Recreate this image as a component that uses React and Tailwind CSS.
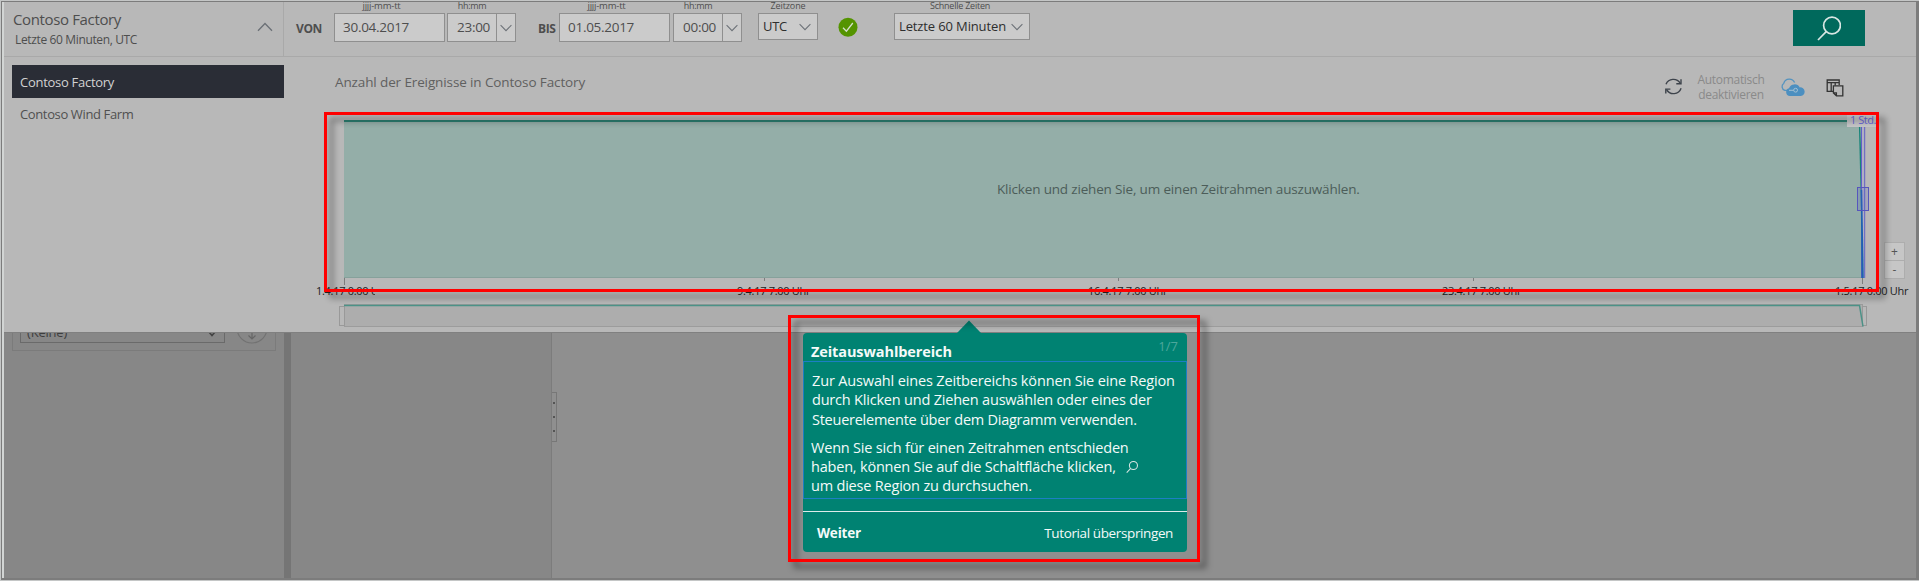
import React from 'react';

function Chevron({ className }) {
  return (
    <svg className={className} viewBox="0 0 14 9" fill="none" stroke="#6b7076" strokeWidth="1.2">
      <path d="M0.7 1.2 L7 7.6 L13.3 1.2" />
    </svg>
  );
}

function Search({ className, width }) {
  return (
    <svg className={className} viewBox="0 0 24 25" fill="none" stroke="#d8e6e3" strokeWidth={width}>
      <circle cx="15" cy="9.5" r="8.4" />
      <path d="M9.2 15.6 L1 24" />
    </svg>
  );
}

function DateField({ value }) {
  return (
    <div className="flex w-[111px] flex-col">
      <div className="h-[11px] pr-4 text-center text-[9.5px] leading-[8px] tracking-[-0.2px]">jjjj-mm-tt</div>
      <div className="h-[29px] border border-[#8f8f8f] bg-[#cbcbcb] pl-2 text-[13.5px] leading-[27px] tracking-[-0.28px]">{value}</div>
    </div>
  );
}

function TimeField({ value }) {
  return (
    <div className="flex w-[69px] flex-col">
      <div className="h-[11px] w-[50px] text-center text-[9px] leading-[8px] tracking-[-0.35px]">hh:mm</div>
      <div className="flex h-[29px] border border-[#8f8f8f] bg-[#cbcbcb]">
        <div className="w-[48px] pl-[9px] text-[13.5px] leading-[27px] tracking-[-0.28px]">{value}</div>
        <div className="flex flex-1 items-center justify-center border-l border-[#8f8f8f]">
          <Chevron className="h-[8px] w-[12px]" />
        </div>
      </div>
    </div>
  );
}

function Header() {
  return (
    <div className="flex h-[55px] shrink-0 border-b border-[#a9a9a9] text-[#4e4e4e]">
      <div className="flex w-[280px] shrink-0 justify-between border-r border-[#a9a9a9] pl-[9px] pr-[10px]">
        <div className="flex flex-col pt-[6px]">
          <div className="text-[15px] leading-[23px] tracking-[-0.36px]">Contoso Factory</div>
          <div className="pl-[2px] pt-px text-[12px] leading-[16px] tracking-[-0.36px]">Letzte 60 Minuten, UTC</div>
        </div>
        <Chevron className="mt-[20px] h-[10px] w-[16px] rotate-180" />
      </div>
      <div className="flex flex-1">
        <div className="ml-[12px] w-[38px] pt-[17px] text-[12px] font-bold leading-[19px] tracking-[-0.4px]">VON</div>
        <DateField value="30.04.2017" />
        <div className="w-[2px]" />
        <TimeField value="23:00" />
        <div className="ml-[22px] w-[21px] pt-[17px] text-[12px] font-bold leading-[19px] tracking-[-0.4px]">BIS</div>
        <DateField value="01.05.2017" />
        <div className="w-[3px]" />
        <TimeField value="00:00" />
        <div className="ml-[16px] flex w-[60px] flex-col">
          <div className="h-[11px] text-center text-[9px] leading-[8px] tracking-[-0.1px]">Zeitzone</div>
          <div className="flex h-[27px] items-center justify-between border border-[#8f8f8f] bg-[#cbcbcb] pl-1 pr-[6px] text-[13px] tracking-[-0.3px] text-[#2e2e2e]">
            UTC
            <Chevron className="h-[8px] w-[12px]" />
          </div>
        </div>
        <svg className="ml-[20px] mt-[15px] h-[20px] w-[20px]" viewBox="0 0 20 20" fill="none">
          <circle cx="10" cy="10.3" r="9.5" fill="#549400" />
          <path d="M5 10.8 L8.4 14.2 L14.8 6" stroke="#d5e0cb" strokeWidth="1.3" />
        </svg>
        <div className="ml-[36px] flex w-[136px] flex-col">
          <div className="h-[11px] pr-1 text-center text-[9px] leading-[8px] tracking-[-0.23px]">Schnelle Zeiten</div>
          <div className="flex h-[27px] items-center justify-between border border-[#8f8f8f] bg-[#cbcbcb] pl-1 pr-[6px] text-[13px] tracking-[-0.13px] text-[#2e2e2e]">
            Letzte 60 Minuten
            <Chevron className="h-[8px] w-[12px]" />
          </div>
        </div>
        <div className="ml-auto mr-[51px] mt-[8px] flex h-[36px] w-[72px] items-center justify-center bg-[#00695c]">
          <Search className="h-[25px] w-[24px]" width="1.7" />
        </div>
      </div>
    </div>
  );
}

function Toolbar() {
  return (
    <div className="flex h-[61px] pl-[50px] text-[#606060]">
      <div className="pt-[15px] text-[13.5px] leading-[20px] tracking-[-0.12px]">Anzahl der Ereignisse in Contoso Factory</div>
      <div className="ml-auto mr-[72px] flex">
        <svg className="mt-[20px] h-[19px] w-[19px]" viewBox="0 0 19 19" fill="none" stroke="#3d434b" strokeWidth="1.4">
          <path d="M2 7.2 A8 8 0 0 1 16.2 6.2 M17.1 11.3 A8 8 0 0 1 2.6 12.6" />
          <path d="M17 2.2 V6.8 H12.3 M1.8 16.6 V12.1 H6.4" />
        </svg>
        <div className="ml-[13px] w-[70px] pt-[15px] text-center text-[12px] leading-[15px] tracking-[-0.3px] text-[#8a8a8a]">
          Automatisch deaktivieren
        </div>
        <svg className="ml-[14px] mt-[21px] h-[19px] w-[25px]" viewBox="0 0 25 19">
          <path d="M9 12.3 H4.8 A4 4 0 0 1 3.8 5.2 A5.8 5.8 0 0 1 14.6 4.6" fill="none" stroke="#5493bf" strokeWidth="1.3" />
          <path d="M9.8 18 A4 4 0 0 1 9 10.2 A6 6 0 0 1 19.8 9.4 A4.3 4.3 0 0 1 20.8 18 Z" fill="#4c8fc0" />
          <circle cx="15.6" cy="12.2" r="1.9" fill="none" stroke="#a5c1d3" strokeWidth="1" />
          <path d="M9 12.3 H13.7" stroke="#a5c1d3" strokeWidth="1" />
        </svg>
        <svg className="ml-[21px] mt-[22px] h-[18px] w-[18px]" viewBox="0 0 18 18" fill="none" stroke="#333" strokeWidth="1.3">
          <path d="M7 12.4 H1.2 V1 H13.2 V6 M1.2 3.6 H13.2 M5.2 3.6 V12.4 M9.2 3.6 V6.5" />
          <path d="M7.4 6.8 H16.8 V16.8 H10.4 L7.4 14 Z M7.4 13.8 H10.4 V16.8" />
        </svg>
      </div>
    </div>
  );
}

function Timeline() {
  return (
    <div className="flex">
      <svg className="h-[167px] w-[1599px] shrink-0" viewBox="285 118 1599 167">
        <path d="M344 121 H1859.5 L1863 277 H344 Z" fill="#94aea8" />
        <path d="M344 277.5 H1863" stroke="#86a19b" />
        <path d="M344 121 H1859.5" stroke="#2c8072" strokeWidth="2" />
        <path d="M1859.5 120 L1863.5 278" stroke="#17857a" strokeWidth="1.5" />
        <rect x="1862" y="127" width="3" height="151" fill="#b0afc4" />
        <path d="M1861.5 127 V278 M1864.7 127 V278" stroke="#6360c4" strokeWidth="1" />
        <path d="M1860.7 190 L1861.5 278 H1863.8 L1862.2 190 Z" fill="#1f62b0" />
        <rect x="1857.5" y="187.5" width="11" height="23" fill="#5057c8" fillOpacity="0.18" stroke="#5655bd" />
        <path d="M344.5 278 V285 M764.5 278 V281 M1118.5 278 V281 M1473.5 278 V281 M1862.5 278 V284" stroke="#7d7d7d" />
      </svg>
      <div className="mb-[6px] flex w-[21px] flex-col self-end border border-[#adadad] bg-[#c6c6c6] text-center text-[12px] text-[#555]">
        <div className="h-[18px] border-b border-[#adadad] leading-[17px]">+</div>
        <div className="h-[17px] leading-[17px]">-</div>
      </div>
    </div>
  );
}

function Axis() {
  return (
    <div className="flex h-[18px] whitespace-nowrap pl-[31px] text-[11px] leading-[12px] tracking-[-0.3px] text-[#222]">
      <div className="w-[421px]">
        <div className="w-[59px] overflow-hidden">1.4.17 0:00 Uhr</div>
      </div>
      <div className="w-[351px]">9.4.17 7:00 Uhr</div>
      <div className="w-[354px]">16.4.17 7:00 Uhr</div>
      <div className="w-[393px]">23.4.17 7:00 Uhr</div>
      <div>1.5.17 0:00 Uhr</div>
    </div>
  );
}

function Overview() {
  return (
    <svg className="h-[28px] w-[1599px]" viewBox="285 303 1599 28" fill="none">
      <rect x="344.5" y="304.5" width="1518" height="22" fill="#adadad" stroke="#9c9c9c" />
      <rect x="339.5" y="306.5" width="5" height="19" stroke="#999" />
      <rect x="1862.5" y="306.5" width="4" height="19" stroke="#999" />
      <path d="M344 305.5 H1859.5 L1863 326.5" stroke="#4b9287" strokeWidth="1.5" />
    </svg>
  );
}

function Lower() {
  return (
    <div className="flex min-h-0 flex-1 overflow-hidden border-t border-[#808080] bg-[#8f8f8f]">
      <div className="flex w-[280px] shrink-0 bg-[#878787] pl-[8px]">
        <div className="-mt-[32px] flex h-[50px] w-[264px] border border-[#7b7b7b] pl-[7px]">
          <div className="mt-[12px] flex h-[29px] w-[205px] items-center justify-between border border-[#6a6a6a] pl-[6px] pr-[8px] pt-[8px] text-[13px] tracking-[-0.2px] text-[#3e3e3e]">
            (Keine)
            <svg className="mt-[2px] h-[6px] w-[8px]" viewBox="0 0 8 6" fill="none" stroke="#444" strokeWidth="1.6">
              <path d="M1 1 L4 4.5 L7 1" />
            </svg>
          </div>
          <svg className="ml-[11px] mt-[11px] h-[32px] w-[32px]" viewBox="0 0 32 32" fill="none" stroke="#727272" strokeWidth="1.2">
            <circle cx="16" cy="15" r="15" />
            <path d="M16 6 V26 M12.5 22.5 L16 26 L19.5 22.5" stroke="#666" />
          </svg>
        </div>
      </div>
      <div className="w-[7px] bg-[#757575]" />
      <div className="w-[261px] border-r border-[#7c7c7c] bg-[#878787]" />
      <div className="mt-[59px] flex h-[50px] w-[5px] flex-col items-center justify-around border border-l-0 border-[#777] py-[3px]">
        <div className="h-[2px] w-[2px] bg-[#555]" />
        <div className="h-[2px] w-[2px] bg-[#555]" />
        <div className="h-[2px] w-[2px] bg-[#555]" />
      </div>
    </div>
  );
}

function Tutorial() {
  return (
    <div className="absolute left-[803px] top-[320px] w-[384px] text-[#f4faf9]">
      <svg className="ml-[154px] h-[13px] w-[24px]" viewBox="0 0 24 13">
        <path d="M0 13 L12 0.5 L24 13 Z" fill="#008272" />
      </svg>
      <div className="flex h-[219px] flex-col rounded-[4px] bg-[#008272]">
        <div className="flex h-[28px] justify-between pl-[8px] pr-[9px]">
          <div className="pt-[9px] text-[14.5px] font-bold leading-[20px] tracking-[-0.1px]">Zeitauswahlbereich</div>
          <div className="pt-[3px] text-[13px] leading-[20px] text-[#4da79c]">1/7</div>
        </div>
        <div className="flex h-[138px] flex-col gap-[9px] whitespace-nowrap border border-[#1c7fc4] pl-[7px] pt-[9px] text-[14.5px] leading-[19.3px]">
          <div className="pl-px">
            <div className="tracking-[-0.15px]">Zur Auswahl eines Zeitbereichs können Sie eine Region</div>
            <div className="tracking-[-0.2px]">durch Klicken und Ziehen auswählen oder eines der</div>
            <div className="tracking-[-0.25px]">Steuerelemente über dem Diagramm verwenden.</div>
          </div>
          <div className="tracking-[-0.2px]">
            <div>Wenn Sie sich für einen Zeitrahmen entschieden</div>
            <div className="flex items-center">
              haben, können Sie auf die Schaltfläche klicken,
              <Search className="ml-[10px] h-[12px] w-[12px]" width="2.2" />
            </div>
            <div>um diese Region zu durchsuchen.</div>
          </div>
        </div>
        <div className="mt-[12px] flex h-[41px] items-center justify-between border-t border-[#dcecea] pl-[14px] pr-[14px] pt-[3px] text-[13.5px]">
          <div className="font-bold tracking-[-0.2px]">Weiter</div>
          <div className="tracking-[-0.38px]">Tutorial überspringen</div>
        </div>
      </div>
    </div>
  );
}

export default function App() {
  return (
    <div className="relative h-[581px] w-[1919px] overflow-hidden bg-[#c4c6c6] pl-px pt-px font-['Open_Sans','Noto_Sans',sans-serif]">
      <div className="flex h-[579px] w-[1918px] border-b-2 border-l border-r-[3px] border-t border-[#7c7c7c] bg-[#d2d5d4] pl-[2px]">
        <div className="flex min-w-0 flex-1 flex-col bg-[#b8b8b8]">
          <Header />
          <div className="flex h-[275px] shrink-0">
            <div className="w-[281px] shrink-0 pl-[8px] pt-[8px]">
              <div className="h-[33px] w-[272px] bg-[#2a2d36] pl-[8px] text-[13px] leading-[35px] tracking-[-0.28px] text-[#d2d2d2]">Contoso Factory</div>
              <div className="h-[33px] pl-[8px] text-[13px] leading-[33px] tracking-[-0.37px] text-[#505050]">Contoso Wind Farm</div>
            </div>
            <div className="min-w-0 flex-1">
              <Toolbar />
              <Timeline />
              <Axis />
              <Overview />
            </div>
          </div>
          <Lower />
        </div>
      </div>
      <div className="absolute left-[997px] top-[179px] whitespace-nowrap text-[13.5px] leading-[20px] tracking-[-0.17px] text-[#4c5d59]">
        Klicken und ziehen Sie, um einen Zeitrahmen auszuwählen.
      </div>
      <div className="absolute left-[1847px] top-[114px] h-[13px] w-[31px] bg-[#c6c6c8] pl-[3px] text-[11px] leading-[12px] tracking-[-0.45px] text-[#6b67d8]">1 Std.</div>
      <Tutorial />
      <div className="absolute left-[324px] top-[112px] h-[180px] w-[1555px] border-[3px] border-[#ff0000] drop-shadow-[6px_6px_3px_rgba(0,0,0,0.45)]" />
      <div className="absolute left-[788px] top-[315px] h-[247px] w-[412px] border-[3px] border-[#ff0000] drop-shadow-[6px_6px_3px_rgba(0,0,0,0.5)]" />
    </div>
  );
}
